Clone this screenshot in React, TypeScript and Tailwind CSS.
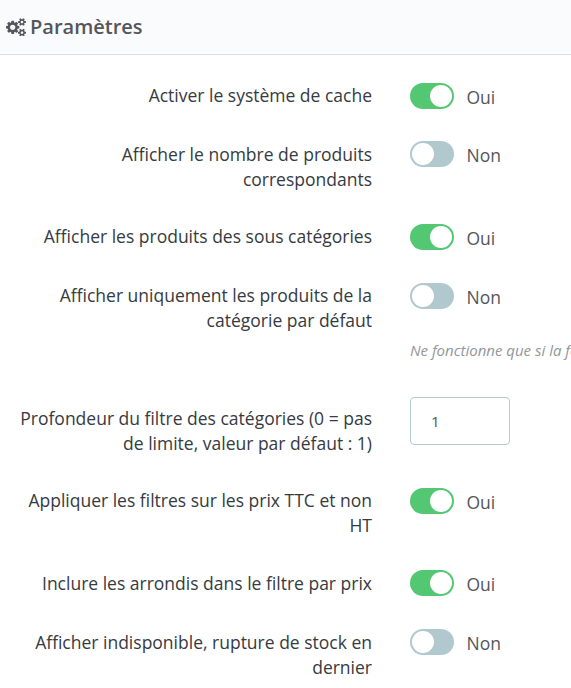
type Row = { lines: string[]; on?: boolean; input?: string; help?: string; height: string; shift?: string; labelShift?: string };

const rows: Row[] = [
  { lines: ["Activer le système de cache"], on: true, height: "h-[59px]" },
  { lines: ["Afficher le nombre de produits", "correspondants"], on: false, height: "h-[82px]", shift: "-mt-px" },
  { lines: ["Afficher les produits des sous catégories"], on: true, height: "h-[59px]" },
  { lines: ["Afficher uniquement les produits de la", "catégorie par défaut"], on: false, help: "Ne fonctionne que si la fo", height: "h-[123px]" },
  { lines: ["Profondeur du filtre des catégories (0 = pas", "de limite, valeur par défaut : 1)"], input: "1", height: "h-[82px]" },
  { lines: ["Appliquer les filtres sur les prix TTC et non", "HT"], on: true, height: "h-[82px]" },
  { lines: ["Inclure les arrondis dans le filtre par prix"], on: true, height: "h-[59px]", labelShift: "pt-px" },
  { lines: ["Afficher indisponible, rupture de stock en", "dernier"], on: false, height: "h-[62px]", labelShift: "pt-px" },
];

function Cogs() {
  return (
    <svg viewBox="0 0 1920 1792" className="h-[18.67px] w-5 shrink-0" fill="currentColor" aria-hidden="true">
      <path d="M896 896q0-106-75-181t-181-75-181 75-75 181 75 181 181 75 181-75 75-181zm768 512q0-52-38-90t-90-38-90 38-38 90q0 53 37.5 90.5t90.5 37.5 90.5-37.5 37.5-90.5zm0-1024q0-52-38-90t-90-38-90 38-38 90q0 53 37.5 90.5t90.5 37.5 90.5-37.5 37.5-90.5zm-384 421v185q0 10-7 19.5t-16 10.5l-155 24q-11 35-32 76 34 48 90 115 7 11 7 20 0 12-7 19-23 30-82.5 89.5t-78.5 59.5q-11 0-21-7l-115-90q-37 19-77 31-11 108-23 155-7 24-30 24h-186q-11 0-20-7.5t-10-17.5l-23-153q-34-10-75-31l-118 89q-7 7-20 7-11 0-21-8-144-133-144-160 0-9 7-19 10-14 41-53t47-61q-23-44-35-82l-152-24q-10-1-17-9.5t-7-19.5v-185q0-10 7-19.5t16-10.5l155-24q11-35 32-76-34-48-90-115-7-11-7-20 0-12 7-20 22-30 82-89t79-59q11 0 21 7l115 90q34-18 77-32 11-108 23-154 7-24 30-24h186q11 0 20 7.5t10 17.5l23 153q34 10 75 31l118-89q8-7 20-7 11 0 21 8 144 133 144 160 0 8-7 19-12 16-42 54t-45 60q23 48 34 82l152 23q10 2 17 10.5t7 19.5zm640 533v140q0 16-149 31-12 27-30 52 51 113 51 138 0 4-4 7-122 71-124 71-8 0-46-47t-52-68q-20 2-30 2t-30-2q-14 21-52 68t-46 47q-2 0-124-71-4-3-4-7 0-25 51-138-18-25-30-52-149-15-149-31v-140q0-16 149-31 13-29 30-52-51-113-51-138 0-4 4-7 4-2 35-20t59-34 30-16q8 0 46 46.5t52 67.5q20-2 30-2t30 2q51-71 92-112l6-2q4 0 124 70 4 3 4 7 0 25-51 138 17 23 30 52 149 15 149 31zm0-1024v140q0 16-149 31-12 27-30 52 51 113 51 138 0 4-4 7-122 71-124 71-8 0-46-47t-52-68q-20 2-30 2t-30-2q-14 21-52 68t-46 47q-2 0-124-71-4-3-4-7 0-25 51-138-18-25-30-52-149-15-149-31v-140q0-16 149-31 13-29 30-52-51-113-51-138 0-4 4-7 4-2 35-20t59-34 30-16q8 0 46 46.5t52 67.5q20-2 30-2t30 2q51-71 92-112l6-2q4 0 124 70 4 3 4 7 0 25-51 138 17 23 30 52 149 15 149 31z" />
    </svg>
  );
}

function Toggle({ on }: { on: boolean }) {
  return (
    <div className="flex h-[26px] items-center">
      <span className={`flex h-[26px] w-11 rounded-full p-[2px] ${on ? "justify-end bg-[#53c772]" : "justify-start bg-[#b0c8ce]"}`}>
        <span className="size-[22px] rounded-full bg-white" />
      </span>
      <span className="ml-[12.5px] pt-[3px] text-[17.5px] leading-[25px] text-[#54565b]">{on ? "Oui" : "Non"}</span>
    </div>
  );
}

export default function App() {
  return (
    <main className="h-[688px] w-[571px] overflow-hidden bg-white font-['Open_Sans',sans-serif] text-[#363a41]">
      <header className="flex h-[55px] items-center gap-1 border-b border-[#d3e4e9] bg-[#fafbfc] pl-[6px] text-[20px] font-semibold text-[#54565b]">
        <Cogs />
        <h1>Paramètres</h1>
      </header>
      <div className="pt-[28px]">
        {rows.map((row) => (
          <div key={row.lines[0]} className={`flex ${row.height}`}>
            <div className={`w-[372px] shrink-0 text-right text-[17.5px] leading-[25px] ${row.labelShift ?? ""}`}>
              {row.lines.map((line) => <div key={line}>{line}</div>)}
            </div>
            <div className={`ml-[38px] shrink-0 ${row.shift ?? ""}`}>
              {row.input ? (
                <input className="-mt-[9px] block h-12 w-[100px] rounded-[4px] border border-[#b5cbd1] px-5 text-[15.3px] text-[#54565b] outline-none" defaultValue={row.input} />
              ) : <Toggle on={!!row.on} />}
              {row.help && <p className="mt-[31px] whitespace-nowrap text-[15px] leading-[20px] text-[#939699] italic">{row.help}</p>}
            </div>
          </div>
        ))}
      </div>
    </main>
  );
}
